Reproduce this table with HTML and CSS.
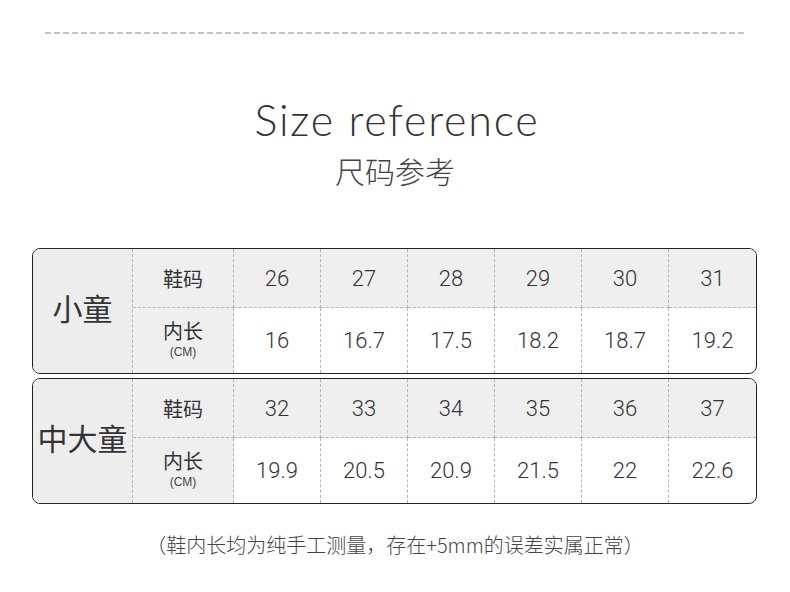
FILE: index.html
```html
<!DOCTYPE html>
<html lang="zh">
<head>
<meta charset="utf-8">
<title>Size reference</title>
<link rel="stylesheet" href="styles.css">
</head>
<body>
<div class="page">
  <div class="dashline"></div>
  <header class="heading">
    <h1 class="title-en">Size reference</h1>
    <h2 class="title-cn">尺码参考</h2>
  </header>
  <section class="tables">
    <div class="size-table">
      <div class="group">小童</div>
      <div class="sub head">鞋码</div>
      <div class="cell head">26</div>
      <div class="cell head">27</div>
      <div class="cell head">28</div>
      <div class="cell head">29</div>
      <div class="cell head">30</div>
      <div class="cell head last">31</div>
      <div class="sub body"><span class="sub-main">内长</span><span class="sub-unit">(CM)</span></div>
      <div class="cell">16</div>
      <div class="cell">16.7</div>
      <div class="cell">17.5</div>
      <div class="cell">18.2</div>
      <div class="cell">18.7</div>
      <div class="cell last">19.2</div>
    </div>
    <div class="size-table">
      <div class="group">中大童</div>
      <div class="sub head">鞋码</div>
      <div class="cell head">32</div>
      <div class="cell head">33</div>
      <div class="cell head">34</div>
      <div class="cell head">35</div>
      <div class="cell head">36</div>
      <div class="cell head last">37</div>
      <div class="sub body"><span class="sub-main">内长</span><span class="sub-unit">(CM)</span></div>
      <div class="cell">19.9</div>
      <div class="cell">20.5</div>
      <div class="cell">20.9</div>
      <div class="cell">21.5</div>
      <div class="cell">22</div>
      <div class="cell last">22.6</div>
    </div>
  </section>
  <p class="note">（鞋内长均为纯手工测量，存在+5mm的误差实属正常）</p>
</div>
</body>
</html>
```
FILE: styles.css
```css
* { box-sizing: border-box; }
html, body { margin: 0; padding: 0; background: #fff; }
body {
  font-family: Roboto, "Noto Sans CJK SC", sans-serif;
  color: #333;
  width: 790px;
  height: 592px;
  overflow: hidden;
}
.page { padding-top: 32px; }
.dashline {
  margin: 0 45px;
  height: 2px;
  background: repeating-linear-gradient(to right, #c2c2c2 0 6px, transparent 6px 9px);
}
.heading { text-align: center; margin-top: 62px; }
.title-en {
  margin: 0;
  padding-left: 4px;
  font-family: Lato, "Noto Sans", sans-serif;
  font-weight: 300;
  font-size: 43px;
  line-height: 48px;
  letter-spacing: 1.8px;
  color: #333;
}
.title-cn {
  margin: 8px 0 0;
  font-family: "Noto Sans CJK SC", sans-serif;
  font-weight: 300;
  font-size: 30px;
  line-height: 36px;
  color: #444;
}
.tables {
  margin: 60px 33px 0 32px;
  display: flex;
  flex-direction: column;
  gap: 4px;
}
.size-table {
  display: grid;
  grid-template-columns: 100px 101px repeat(6, 1fr);
  grid-template-rows: 59px 65px;
  border: 1px solid #222;
  border-radius: 8px;
  overflow: hidden;
}
.group {
  grid-row: 1 / span 2;
  background: #ededed;
  border-right: 1px dashed #b5b5b5;
  display: flex;
  align-items: center;
  justify-content: center;
  padding-bottom: 9px;
  font-family: "Noto Sans CJK SC", sans-serif;
  font-size: 30px;
  color: #333;
}
.sub {
  background: #efefef;
  border-right: 1px dashed #b5b5b5;
  display: flex;
  flex-direction: column;
  align-items: center;
  justify-content: center;
  font-family: "Noto Sans CJK SC", sans-serif;
  font-size: 20px;
  color: #333;
}
.sub.head { border-bottom: 1px dashed #b5b5b5; }
.sub.body { padding-bottom: 2px; }
.sub-main { display: block; line-height: 20px; }
.sub-unit {
  display: block;
  margin-top: 5px;
  font-family: "Liberation Sans", sans-serif;
  font-size: 12px;
  line-height: 13px;
  color: #444;
}
.cell {
  display: flex;
  align-items: center;
  justify-content: center;
  border-right: 1px dashed #b5b5b5;
  font-family: Roboto, sans-serif;
  font-weight: 300;
  font-size: 22px;
  color: #333;
}
.cell.head { background: #efefef; border-bottom: 1px dashed #b5b5b5; }
.cell.last { border-right: none; }
.note {
  margin: 26px 0 0;
  text-align: center;
  font-family: "Noto Sans CJK SC", sans-serif;
  font-weight: 300;
  font-size: 20px;
  color: #444;
}
```
